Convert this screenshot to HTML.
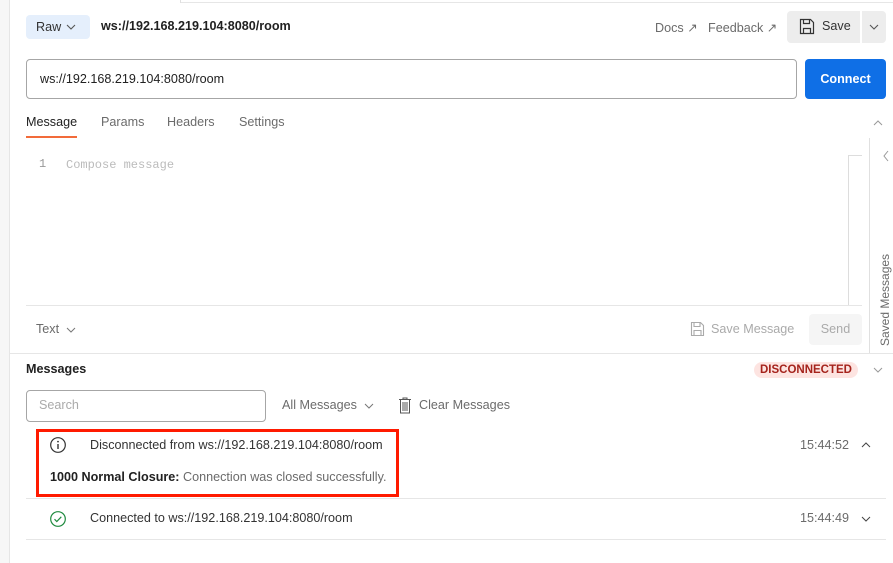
<!DOCTYPE html>
<html><head><meta charset="utf-8"><style>
*{margin:0;padding:0;box-sizing:border-box}
body{width:893px;height:563px;overflow:hidden;background:#fff;font-family:"Liberation Sans",sans-serif;font-size:12.6px;color:#212121;position:relative}
.a{position:absolute;white-space:nowrap}
.g{color:#6b6b6b}
.hl{position:absolute;height:1px;background:#e6e6e6}
.vl{position:absolute;width:1px;background:#e0e0e0}
svg{position:absolute}
</style></head><body>
<div class="a" style="left:0;top:0;width:10px;height:563px;background:#f7f7f7;border-right:1px solid #e6e6e6"></div>
<div class="hl" style="left:180px;top:2px;width:713px"></div>
<div class="vl" style="left:180px;top:0;height:3px"></div>

<div class="a" style="left:26px;top:15px;width:64px;height:24px;background:#e5effc;border-radius:4px"></div>
<div class="a" style="left:36px;top:20px;color:#333">Raw</div>
<svg style="left:66px;top:23px" width="10" height="8"><path d="M1 2l4 4 4-4" fill="none" stroke="#555" stroke-width="1.1"/></svg>
<div class="a" style="left:101px;top:19px;font-weight:bold;font-size:12.6px">ws://192.168.219.104:8080/room</div>

<div class="a g" style="left:655px;top:20px">Docs ↗</div>
<div class="a g" style="left:708px;top:20px">Feedback ↗</div>
<div class="a" style="left:787px;top:11px;width:73px;height:32px;background:#ededed;border-radius:4px 0 0 4px"></div>
<div class="a" style="left:862px;top:11px;width:24px;height:32px;background:#ededed;border-radius:0 4px 4px 0"></div>
<svg style="left:799px;top:18px" width="16" height="17"><path d="M1.5 1.5h10l3 3v11h-13z M4.5 1.5v4h6v-4 M4.5 15.5v-5h7v5" fill="none" stroke="#333" stroke-width="1.2"/></svg>
<div class="a" style="left:822px;top:19px;color:#333">Save</div>
<svg style="left:869px;top:23px" width="10" height="8"><path d="M1 2l4 4 4-4" fill="none" stroke="#555" stroke-width="1.1"/></svg>

<div class="a" style="left:26px;top:59px;width:771px;height:40px;border:1px solid #a6a6a6;border-radius:4px"></div>
<div class="a" style="left:40px;top:72px">ws://192.168.219.104:8080/room</div>
<div class="a" style="left:805px;top:59px;width:81px;height:40px;background:#0f6fe6;border-radius:4px;color:#fff;font-weight:bold;text-align:center;line-height:40px">Connect</div>

<div class="a" style="left:26px;top:115px">Message</div>
<div class="a" style="left:26px;top:136px;width:51px;height:2px;background:#f26b3a"></div>
<div class="a g" style="left:101px;top:115px">Params</div>
<div class="a g" style="left:167px;top:115px">Headers</div>
<div class="a g" style="left:239px;top:115px">Settings</div>
<svg style="left:873px;top:119px" width="10" height="8"><path d="M1 6l4-4 4 4" fill="none" stroke="#999" stroke-width="1"/></svg>

<div class="a" style="left:39px;top:157px;color:#999;font-family:'Liberation Mono',monospace;font-size:12px">1</div>
<div class="a" style="left:66px;top:158px;color:#bbb;font-family:'Liberation Mono',monospace;font-size:12px">Compose message</div>
<div class="vl" style="left:848px;top:155px;height:150px;background:#ddd"></div>
<div class="hl" style="left:848px;top:155px;width:14px;background:#ddd"></div>
<div class="vl" style="left:869px;top:138px;height:215px"></div>
<svg style="left:882px;top:150px" width="8" height="12"><path d="M6 1L2 6l4 5" fill="none" stroke="#999" stroke-width="1"/></svg>
<div class="a g" style="left:878px;top:346px;transform:rotate(-90deg);transform-origin:0 0;font-size:12px">Saved Messages</div>

<div class="hl" style="left:26px;top:305px;width:836px"></div>
<div class="a g" style="left:36px;top:322px">Text</div>
<svg style="left:66px;top:326px" width="10" height="8"><path d="M1 2l4 4 4-4" fill="none" stroke="#777" stroke-width="1"/></svg>
<svg style="left:690px;top:321px" width="15" height="16"><path d="M1.5 1.5h9l3 3v10h-12z M4 1.5v4h6v-4 M4 14.5v-5h7v5" fill="none" stroke="#aaa" stroke-width="1.1"/></svg>
<div class="a" style="left:711px;top:322px;color:#aaa">Save Message</div>
<div class="a" style="left:809px;top:314px;width:53px;height:31px;background:#f5f5f5;border-radius:4px;color:#aaa;text-align:center;line-height:31px">Send</div>

<div class="hl" style="left:10px;top:353px;width:883px"></div>
<div class="a" style="left:26px;top:362px;font-weight:bold">Messages</div>
<div class="a" style="left:754px;top:362px;width:104px;height:16px;background:#fde4e1;border-radius:8px;color:#a5231c;font-weight:bold;font-size:11.5px;text-align:center;line-height:16px">DISCONNECTED</div>
<svg style="left:873px;top:366px" width="10" height="8"><path d="M1 2l4 4 4-4" fill="none" stroke="#999" stroke-width="1"/></svg>

<div class="a" style="left:26px;top:390px;width:240px;height:32px;border:1px solid #a6a6a6;border-radius:4px"></div>
<div class="a" style="left:39px;top:398px;color:#aaa">Search</div>
<div class="a g" style="left:282px;top:398px">All Messages</div>
<svg style="left:364px;top:402px" width="10" height="8"><path d="M1 2l4 4 4-4" fill="none" stroke="#777" stroke-width="1"/></svg>
<svg style="left:398px;top:397px" width="14" height="17"><path d="M1 2.5h12 M5 2.5v-1.5h4v1.5 M2.5 2.5v13.5h9v-13.5 M5 5v9 M7 5v9 M9 5v9" fill="none" stroke="#555" stroke-width="1"/></svg>
<div class="a g" style="left:419px;top:398px">Clear Messages</div>

<div class="a" style="left:36px;top:429px;width:363px;height:68px;border:3px solid #ff1a00"></div>
<svg style="left:49px;top:436px" width="18" height="18"><circle cx="9" cy="9" r="7.3" fill="none" stroke="#333" stroke-width="1.2"/><path d="M9 8v5" stroke="#333" stroke-width="1.4"/><circle cx="9" cy="5.6" r="0.9" fill="#333"/></svg>
<div class="a" style="left:90px;top:438px;color:#333">Disconnected from ws://192.168.219.104:8080/room</div>
<div class="a" style="left:50px;top:470px;font-size:12.6px"><b>1000 Normal Closure:</b> <span class="g">Connection was closed successfully.</span></div>
<div class="a g" style="left:800px;top:438px">15:44:52</div>
<svg style="left:861px;top:441px" width="10" height="8"><path d="M1 6l4-4 4 4" fill="none" stroke="#444" stroke-width="1"/></svg>

<div class="hl" style="left:26px;top:498px;width:860px"></div>
<svg style="left:49px;top:510px" width="18" height="18"><circle cx="9" cy="9" r="7.3" fill="none" stroke="#1e8a3e" stroke-width="1.2"/><path d="M5.5 9.2l2.3 2.3 4.5-4.7" fill="none" stroke="#1e8a3e" stroke-width="1.2"/></svg>
<div class="a" style="left:90px;top:511px;color:#333">Connected to ws://192.168.219.104:8080/room</div>
<div class="a g" style="left:800px;top:511px">15:44:49</div>
<svg style="left:861px;top:515px" width="10" height="8"><path d="M1 2l4 4 4-4" fill="none" stroke="#444" stroke-width="1"/></svg>
<div class="hl" style="left:26px;top:539px;width:860px"></div>
</body></html>
